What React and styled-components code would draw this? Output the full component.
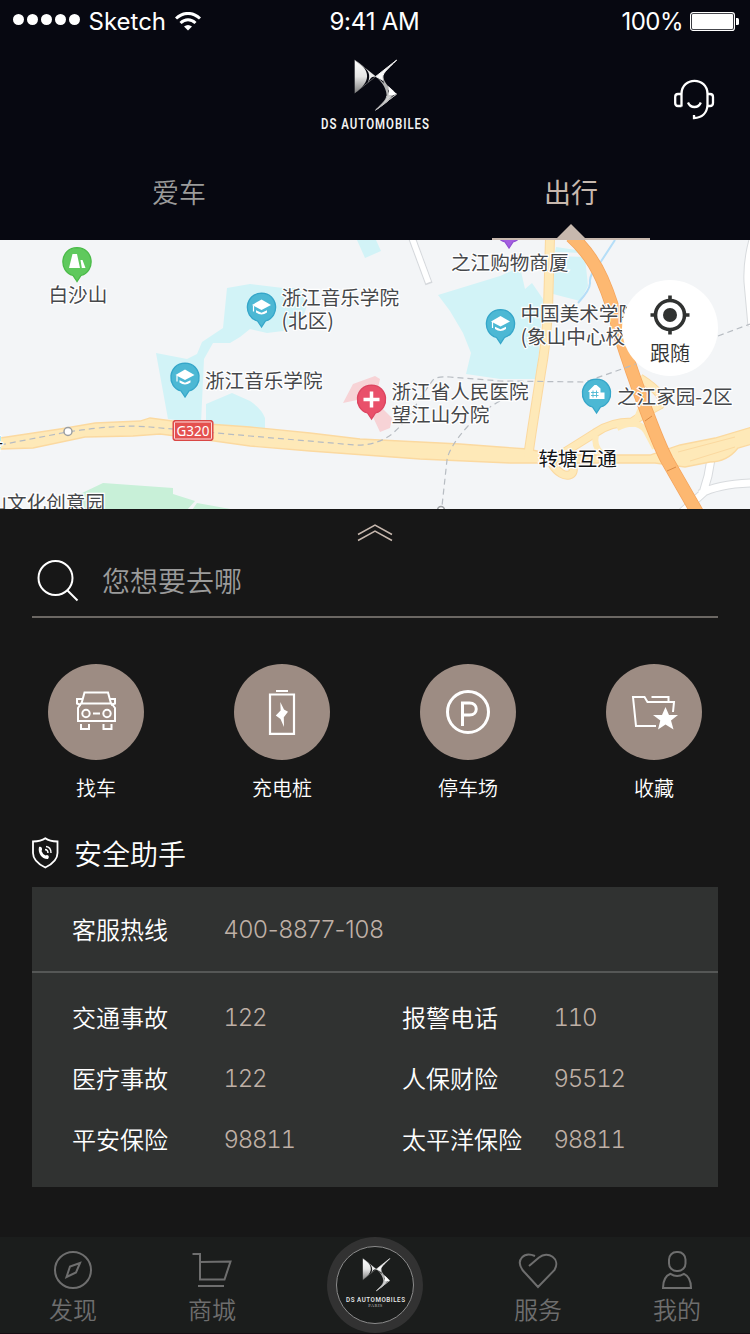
import React from 'react';
import styled, { createGlobalStyle } from 'styled-components';

const cjk = '"Noto Sans CJK SC", sans-serif';
const latin = 'Inter, "Noto Sans CJK SC", sans-serif';

const GlobalStyle = createGlobalStyle`
  * { box-sizing: border-box; }
  body { margin: 0; background: #171717; font-family: ${cjk}; }
  svg { display: block; }
`;

const Screen = styled.div`
  width: 750px;
  height: 1334px;
  display: flex;
  flex-direction: column;
  overflow: hidden;
  background: #171717;
`;

/* ---------- header ---------- */
const Header = styled.header`
  height: 240px;
  display: flex;
  flex-direction: column;
  background: #070811;
`;
const StatusBar = styled.div`
  height: 40px;
  display: grid;
  grid-template-columns: 1fr auto 1fr;
  align-items: center;
  padding: 3px 11px 0 13px;
  color: #fff;
  font: 400 24px/36px ${latin};
`;
const StatusGroup = styled.div`
  display: flex;
  align-items: center;
  justify-content: ${(p) => (p.$end ? 'flex-end' : 'flex-start')};
  gap: ${(p) => (p.$end ? 7 : 8.5)}px;
`;
const StatusText = styled.span`
  letter-spacing: ${(p) => p.$track || 0}px;
  margin-left: ${(p) => p.$shift || 0}px;
`;
const Dots = styled.div`
  display: flex;
  gap: 3px;
  margin-top: -4px;
`;
const Dot = styled.i`
  width: 11px;
  height: 11px;
  border-radius: 50%;
  background: #fff;
`;
const BrandRow = styled.div`
  height: 104px;
  display: grid;
  grid-template-columns: 1fr 180px 1fr;
  align-items: start;
`;
const SupportButton = styled.div`
  justify-self: end;
  padding: 38px 35px 0 0;
`;
const Tabs = styled.nav`
  height: 96px;
  display: flex;
  justify-content: space-between;
  padding: 0 100px;
`;
const Tab = styled.div`
  width: 158px;
  display: flex;
  flex-direction: column;
  align-items: center;
  justify-content: space-between;
  padding-top: 28px;
  font-size: 27px;
  line-height: 40px;
  font-weight: ${(p) => (p.$active ? 400 : 350)};
  color: ${(p) => (p.$active ? '#c7b8ae' : '#9b9b9b')};
`;
const TabMarker = styled.div`
  width: 100%;
  border-bottom: 2px solid #c7b8ae;
  display: flex;
  justify-content: center;
  &::before {
    content: '';
    border: 14px solid transparent;
    border-top-width: 0;
    border-bottom-color: #c7b8ae;
  }
`;

/* ---------- map ---------- */
const MapArea = styled.section`
  position: relative;
  height: 269px;
  flex: none;
  overflow: hidden;
  background: #f3f5f7;
`;
const MapLabel = styled.div`
  position: absolute;
  left: ${(p) => p.$x}px;
  top: ${(p) => p.$y - 253}px;
  font-size: 19.6px;
  line-height: 23px;
  white-space: pre;
  font-weight: 400;
  color: ${(p) => (p.$strong ? '#121315' : '#46484b')};
  -webkit-text-stroke: 2.4px #fff;
  paint-order: stroke fill;
`;
const FollowButton = styled.div`
  position: absolute;
  right: 32px;
  top: 40px;
  width: 96px;
  height: 96px;
  border-radius: 50%;
  background: #fff;
  display: flex;
  flex-direction: column;
  align-items: center;
  padding-top: 15px;
  gap: 3px;
  color: #303231;
  font-size: 20px;
  font-weight: 350;
  line-height: 30px;
`;

/* ---------- panel ---------- */
const Panel = styled.main`
  height: 728px;
  flex: none;
  display: flex;
  flex-direction: column;
  padding: 14px 32px 0;
`;
const Handle = styled.div`
  display: flex;
  justify-content: center;
`;
const SearchBar = styled.div`
  height: 76px;
  display: flex;
  align-items: center;
  gap: 22px;
  padding: 2px 0 0 4px;
  border-bottom: 2px solid #6b6763;
  color: #9b9b9b;
  font-size: 28px;
  font-weight: 350;
  line-height: 40px;
`;
const Shortcuts = styled.div`
  display: flex;
  justify-content: space-between;
  padding: 46px 16px 0;
`;
const Shortcut = styled.div`
  width: 96px;
  display: flex;
  flex-direction: column;
  align-items: center;
  gap: 13px;
  color: #fff;
  font-size: 20px;
  font-weight: 350;
  line-height: 30px;
`;
const ShortcutDisc = styled.div`
  width: 96px;
  height: 96px;
  border-radius: 50%;
  background: #9d8c83;
  display: grid;
  place-items: center;
`;
const SectionTitle = styled.h2`
  margin: 29px 0 13px;
  height: 42px;
  display: flex;
  align-items: center;
  gap: 15px;
  color: #fff;
  font-size: 28px;
  font-weight: 350;
  line-height: 42px;
`;
const Card = styled.section`
  background: #303231;
  height: 300px;
`;
const CardRows = styled.div`
  display: grid;
  grid-template-columns: 152px 178px 152px 1fr;
  grid-auto-rows: 61px;
  align-items: center;
  padding: ${(p) => (p.$top ? '12px 0 11px 40px' : '14px 0 0 40px')};
  border-bottom: ${(p) => (p.$top ? '2px solid #555756' : 'none')};
`;
const RowLabel = styled.span`
  color: #fff;
  font-size: 24px;
  font-weight: 350;
  line-height: 36px;
  padding-bottom: 2px;
`;
const RowValue = styled.span`
  color: #bfb0a6;
  font: 300 24px/36px ${latin};
  font-variant-numeric: ${(p) => (p.$wide ? 'normal' : 'tabular-nums')};
  letter-spacing: ${(p) => (p.$wide ? -0.15 : -1.3)}px;
  margin-left: -0.5px;
  white-space: nowrap;
`;

/* ---------- bottom navigation ---------- */
const BottomNav = styled.nav`
  height: 97px;
  flex: none;
  display: flex;
  justify-content: space-between;
  padding: 0 24px;
  background: #1b1d1c;
  border-bottom: 1px solid #150d12;
`;
const NavPair = styled.div`
  display: flex;
  gap: 41px;
`;
const NavItem = styled.div`
  width: 98px;
  display: flex;
  flex-direction: column;
  align-items: center;
  padding-top: 13px;
  color: #6e6e6e;
  font-size: 24px;
  font-weight: 350;
  line-height: 38px;
`;
const NavHome = styled.div`
  width: 96px;
  height: 96px;
  border-radius: 50%;
  background: #323232;
  display: grid;
  place-items: center;
`;

/* ---------- drawings ---------- */
const Emblem = ({ id }) => (
  <>
    <defs>
      <linearGradient id={id} x1="0" y1="0" x2="0" y2="1">
        <stop offset="0" stopColor="#fff" />
        <stop offset=".5" stopColor="#e6e6e6" />
        <stop offset="1" stopColor="#808080" />
      </linearGradient>
    </defs>
    <path d="M0 0C16.500 10 16.500 22 0 33Z" fill={`url(#${id})`} />
    <path d="M0 0L21 16.500L0 33" fill="none" stroke="#8a8a8a" strokeWidth=".6" />
    <path d="M6 4.500L21 16.500L17.500 17C15.500 18 15 20 13 23C16.500 15 14 10 6 4.500Z" fill="#eee" />
    <path d="M42 0L21 16.500L28.500 20.500C26 13.500 33 9.500 42 0Z" fill="#fafafa" stroke="#eee" strokeWidth="1" />
    <path d="M22 17.500C26 20 34 26 35 37L32 38.500C32.500 29 28 23 22 17.500ZM28.500 16C29 22 33 26 39 31L36 32C30.500 28 27.500 22 28.500 16Z" fill="#b2b2b2" />
    <path d="M33.500 26L42 34L33 37.500C34.500 34 34.500 30 33.500 26Z" fill="#fff" />
    <path d="M42 34L21 50C28 43 31.500 40 32 36L37 35.500C35 40 32 42.500 21 50Z" fill="#cfcfcf" stroke="#bdbdbd" strokeWidth=".9" />
  </>
);

const BrandLogo = () => (
  <svg width="180" height="104" viewBox="285 40 180 104">
    <g transform="translate(354.700 60)"><Emblem id="brand" /></g>
    <text x="321" y="129" textLength="109" lengthAdjust="spacingAndGlyphs" fill="#f2f2f2" fontFamily="Roboto" fontWeight="600" fontSize="15" letterSpacing="1.300">DS AUTOMOBILES</text>
  </svg>
);

const Wifi = () => (
  <svg width="26" height="20" viewBox="0 1 26 20" fill="none" stroke="#fff" strokeWidth="3">
    <path d="M1 7.500C8 .7 18 .7 25 7.500" />
    <path d="M5.500 12C10 7.800 16 7.800 20.500 12" />
    <path d="M13 19.500L9 15.600C11.500 13.600 14.500 13.600 17 15.600Z" fill="#fff" stroke="none" />
  </svg>
);

const Battery = () => (
  <svg width="49" height="20" viewBox="0 0 49 20">
    <rect x=".6" y=".6" width="43.800" height="17.800" rx="2.500" fill="none" stroke="#fff" strokeWidth="1.200" />
    <rect x="2" y="2" width="41" height="15" rx="1" fill="#fff" />
    <path d="M46 6h1.500q1.500 0 1.500 1.500v4q0 1.500-1.500 1.500H46Z" fill="#fff" />
  </svg>
);

const Headset = () => (
  <svg width="42" height="42" viewBox="673 78 42 42" fill="none" stroke="#fff" strokeWidth="2.300">
    <path d="M681.500 106.500V94C681.500 76.500 707.500 76.500 707.500 94V105C707 113 702 117.800 694 118V115" />
    <path d="M681.500 94H678Q675.200 94 675.200 97V103Q675.200 106 678 106H681.500M707.500 94H710Q713 94 713 97V103Q713 106 710 106H707.500" />
    <path d="M688 102.500C690.500 108.500 698.500 108.500 700.800 102.500" />
  </svg>
);

const pinGlyphs = {
  tree: <path d="M-8 6L-4.500-8H0L3 6ZM3.500-2H5.500L8.500 6H4.800Z" fill="#fff" />,
  cap: (
    <>
      <path d="M0-8L9.500-2.500L0 2.500L-9.500-2.500Z" fill="#fff" />
      <path d="M-5.500 2.800L0 5.200L5.500 2.800V5Q0 9-5.500 5Z" fill="#fff" />
      <path d="M-8-2V4" stroke="#fff" strokeWidth="1.200" />
    </>
  ),
  cross: <path d="M0-8V8M-8 0H8" stroke="#fff" strokeWidth="3.500" />,
  home: (
    <>
      <path d="M-8.500-2L-2-8.500H0L4-5V-1H8V5.500H-7V-1.500Z" fill="#fff" />
      <path d="M-3.500-3V4M0-3V4M-5.500-1H2M-5.500 2H2" stroke="#4cb8d4" strokeWidth=".9" />
    </>
  ),
};

const Pin = ({ x, y, fill, edge, glyph }) => (
  <g transform={`translate(${x} ${y})`}>
    <path d="M0 19.500L-4 13.500C-19 9-17-14 0-14.300C17-14 19 9 4 13.500Z" fill={fill} stroke={edge} strokeWidth="1.300" />
    {pinGlyphs[glyph]}
  </g>
);

const MapDrawing = () => (
  <svg width="750" height="269" viewBox="0 240 750 269" fill="none">
    <g fill="#d2f3f7">
      <path d="M156 353L187 359L197 354L202 342L223 328L227 288L250 284L283 288L300 288L307 306L300 325L283 331L267 333L250 329L240 337L230 343L213 343L204 359L201 423L168 419Z" />
      <path d="M206 404L232 393L250 401Q262 409 265 418V430L206 425Z" />
      <path d="M357 240L365 258L381 251L376 240Z" />
      <path d="M438 295L500 276L520 267L525 289L532 283L543 299L537 379H500L466 374L471 353L463 333L450 311Z" />
      <path d="M555 256L585 257L588 286L580 301L553 294ZM556 247L583 251V253L555 252Z" />
    </g>
    <path d="M80 494L103 483L173 488V494L195 501L187 510H85ZM197 503L236 510H192Z" fill="#c8f0d8" />
    <path d="M343 403L353 384L375 376L380 379L378 388L383 409L392 418L390 428L380 432L373 417L357 400Z" fill="#f7d3d6" />
    <path d="M615 240L600 263Q589 275 590 282T578 303" stroke="#b5def8" strokeWidth="2" />

    <path d="M412 238L429 284" stroke="#d5d8dc" strokeWidth="7.500" />
    <path d="M412 238L428.500 282.500" stroke="#fff" strokeWidth="5.500" />
    <path d="M753 240Q747 262 748 282L752 326M710 440L711 459L708 476L703 493L680 514M700 494Q718 484 752 483" stroke="#d8dbde" strokeWidth="9" />
    <path d="M753 240Q747 262 748 282L752 326M710 440L711 459L708 476L703 493L680 514M700 494Q718 484 752 483" stroke="#fff" strokeWidth="7" />

    <g stroke="#fbd9a0">
      <path d="M550 238L548 310Q546 345 541 372L532 430L528 457" strokeWidth="10" />
      <path d="M560 455L595 433Q610 422 632 422Q650 410 660 405Q668 396 640 378M552 464C564 483 579 474 571 465L569 462" strokeWidth="9" />
      <path d="M0 438L60 429L95 423L140 421L150 418L180 422L250 427L310 433L360 439L460 444L500 447L528 449L555 455H650L680 445L715 438L752 427V444L738 448Q727 462 710 462L685 467L655 463H550L510 463L420 459L310 451L250 446L200 439L160 434L133 436L85 437L33 448L0 449Z" fill="#fee9b8" strokeWidth="1.300" />
      <path d="M550 238L548 310Q546 345 541 372L532 430L528 457" stroke="#fee9b8" strokeWidth="8" />
      <path d="M552 464C564 483 579 474 571 465L569 462M560 455L595 433Q610 422 632 422Q650 410 660 405Q668 396 640 378" stroke="#fee9b8" strokeWidth="7" />
      <path d="M596 435Q593 446 602 454M617 428Q637 418 646 431L655 448M635 423L645 398" stroke="#fee9b8" strokeWidth="6" />
      <path d="M678 452L735 437M690 461L735 447" strokeWidth="1" />
    </g>
    <path d="M571 236Q591 254 602 279Q613 304 619 332Q632 373 646 410T667 460L698 514" stroke="#f5a55d" strokeWidth="13.500" />
    <path d="M571 236Q591 254 602 279Q613 304 619 332Q632 373 646 410T667 460L698 514" stroke="#fdb871" strokeWidth="12" />
    <path d="M667 471L676 467M645 421L652 416" stroke="#db8b45" strokeWidth="1" />

    <g stroke="#b7bcc2" strokeWidth="1.200" strokeDasharray="6 4">
      <path d="M0 445L67 432Q120 424 150 427L250 436L355 445Q376 446 392 434Q410 418 418 401L433 380Q437 376 450 377L500 381L585 382L636 364M718 336L750 324" />
      <path d="M500 401Q480 412 468 426Q449 447 447 460L442 506" />
    </g>
    <circle cx="68" cy="431.500" r="4" fill="#fff" stroke="#9b9ea1" strokeWidth="1.500" />
    <circle cx="441" cy="510" r="3.500" fill="#fff" stroke="#9b9ea1" strokeWidth="1.500" />
    <rect x="173" y="420.500" width="40" height="20" rx="2" fill="#e4504e" stroke="#d94745" />
    <rect x="174.500" y="422" width="37" height="17" rx="1" stroke="#fbdcdc" strokeWidth="1" />
    <text x="193" y="435.600" textAnchor="middle" fill="#fff" fontFamily="Noto Sans" fontSize="13.500">G320</text>

    <Pin x={77} y={262} fill="#5fc95d" edge="#4abb48" glyph="tree" />
    <Pin x={185} y={377.500} fill="#4cb8d4" edge="#35a6c9" glyph="cap" />
    <Pin x={261.500} y={307.500} fill="#4cb8d4" edge="#35a6c9" glyph="cap" />
    <Pin x={500.500} y={324} fill="#4cb8d4" edge="#35a6c9" glyph="cap" />
    <Pin x={596.500} y={393.500} fill="#4cb8d4" edge="#35a6c9" glyph="home" />
    <Pin x={371.500} y={399.500} fill="#e9506a" edge="#dc4560" glyph="cross" />
    <Pin x={509} y={228.500} fill="#a45fe0" edge="#9150d2" />
  </svg>
);

const labels = [
  { x: 48.5, y: 295, text: '白沙山' },
  { x: 281.5, y: 298, text: '浙江音乐学院\n(北区)' },
  { x: 205, y: 381, text: '浙江音乐学院' },
  { x: 391.5, y: 392, text: '浙江省人民医院\n望江山分院' },
  { x: 451, y: 262.5, text: '之江购物商厦' },
  { x: 520.5, y: 314, text: '中国美术学院\n(象山中心校区)' },
  { x: 617, y: 397, text: '之江家园-2区' },
  { x: 538.5, y: 458.5, text: '转塘互通', strong: true },
  { x: -12.5, y: 502.5, text: '山文化创意园' },
  { x: -16, y: 445, text: '号', strong: true },
];

const Locate = () => (
  <svg width="40" height="40" viewBox="-20 -20 40 40" fill="none" stroke="#303231" strokeWidth="3.600">
    <circle r="14.500" />
    <circle r="7" fill="#303231" stroke="none" />
    <path d="M0-19.500V-13M0 13V19.500M-19.500 0H-13M13 0H19.500" />
  </svg>
);

const Chevrons = () => (
  <svg width="36" height="19" viewBox="357 523 36 19" fill="none" stroke="#c7b8ae" strokeWidth="1.500">
    <path d="M358 534.500L375 525L392 534.500M358 540.500L375 531L392 540.500" />
  </svg>
);

const Magnifier = () => (
  <svg width="44" height="44" viewBox="36 558 44 44" fill="none" stroke="#fff" strokeWidth="2">
    <circle cx="55.500" cy="578" r="17" />
    <path d="M67 590L77.500 600.500" />
  </svg>
);

const CarIcon = () => (
  <svg width="48" height="48" viewBox="72 688 48 48" fill="none" stroke="#fff" strokeWidth="2">
    <path d="M81.500 703.500L84.500 692.500H108L111 703.500M81 703.500H111.500L115 708V721H78V708Z" />
    <path d="M82 699H77V703.500L81 705M110 699H115V703.500L111 705M81 724V729H89V724M103.500 724V729H111.500V724M93 713.500H100" />
    <circle cx="86" cy="713.500" r="3.700" />
    <circle cx="107" cy="713.500" r="3.700" />
  </svg>
);
const ChargeIcon = () => (
  <svg width="48" height="48" viewBox="258 688 48 48" fill="none" stroke="#fff" strokeWidth="2.200">
    <path d="M270 694.500H294V733.800H270ZM276 691H288" />
    <path d="M280.300 702L284 709.500L288 711.800L283.800 717.300L284 727L280.500 719L275.800 715.500L280.600 710.500Z" fill="#fff" stroke="none" />
  </svg>
);
const ParkingIcon = () => (
  <svg width="48" height="48" viewBox="444 688 48 48" fill="none" stroke="#fff" strokeWidth="3">
    <circle cx="468" cy="712" r="20.500" />
    <path d="M462.500 726V703H469.500C478.500 703 478.500 715 469.500 715H462.500" />
  </svg>
);
const FavouriteIcon = () => (
  <svg width="48" height="48" viewBox="630 688 48 48" fill="none" stroke="#fff" strokeWidth="2">
    <path d="M656 726H636L633 697H644.500L647.500 702H674L673 712M651.500 697H668.500V702" />
    <path d="M665.500 707L669 715H678L671 720.500L673.500 729.500L665.500 724.500L658 729.500L660.300 720.500L653 715H662Z" fill="#fff" stroke="none" />
  </svg>
);
const ShieldPhone = () => (
  <svg width="27" height="32" viewBox="0 0 27 32" fill="none" stroke="#fff" strokeWidth="1.800">
    <path d="M13.300 1.300C10 3.800 6 4.500 1 4.500V16C1 23 6 27 13.300 30.500C20.500 27 25.500 23 25.500 16V4.500C20.500 4.500 16.500 3.800 13.300 1.300Z" />
    <path d="M7 10C9 9 10.500 11 10 13L9.500 14Q10.500 17 13.500 18.500L15 18C17 18.500 17.500 20 16 22C10 22.500 5.500 16 7 10Z" fill="#fff" stroke="none" />
    <path d="M13 12.500Q16 12.700 16 16M14 9.500Q19 10 19 16" strokeWidth="1.400" />
  </svg>
);

const CompassIcon = () => (
  <svg width="42" height="40" viewBox="52 1250 42 40" fill="none" stroke="#6e6e6e" strokeWidth="2">
    <circle cx="73" cy="1270" r="18" />
    <path d="M80 1263L76 1272.500L66.500 1277L70 1266.500Z" />
  </svg>
);
const CartIcon = () => (
  <svg width="42" height="40" viewBox="191 1250 42 40" fill="none" stroke="#6e6e6e" strokeWidth="2">
    <path d="M192.500 1254H200V1279.500H224.500L230.500 1261.500L200 1262M198 1286H224" />
  </svg>
);
const HeartIcon = () => (
  <svg width="42" height="40" viewBox="517 1250 42 40" fill="none" stroke="#6e6e6e" strokeWidth="2">
    <path d="M529 1266L539 1257.500C548 1250 561 1259 554.500 1270L538 1287L522.500 1270C515.500 1260 524 1251 535 1256" />
  </svg>
);
const PersonIcon = () => (
  <svg width="42" height="40" viewBox="656 1250 42 40" fill="none" stroke="#6e6e6e" strokeWidth="2">
    <rect x="669" y="1252" width="16.500" height="19" rx="7.500" />
    <path d="M670.500 1273.800Q677 1278 684 1273.800C689 1276 691 1280 691 1288H663C663 1280 665 1276 670.500 1273.800Z" />
  </svg>
);
const HomeLogo = () => (
  <svg width="80" height="80" viewBox="335 1245 80 80">
    <circle cx="375" cy="1285" r="38.500" fill="#1b1d1c" stroke="#8b8b8b" strokeWidth="1" />
    <g transform="translate(362.800 1258.500) scale(.645)"><Emblem id="home" /></g>
    <text x="346" y="1301.500" textLength="59.500" lengthAdjust="spacingAndGlyphs" fill="#eee" fontFamily="Roboto" fontWeight="500" fontSize="8" letterSpacing=".7">DS AUTOMOBILES</text>
    <text x="375.500" y="1307.200" textAnchor="middle" fill="#bbb" fontFamily="Liberation Serif" fontSize="4.600" letterSpacing=".4">PARIS</text>
  </svg>
);

const shortcuts = [
  ['找车', CarIcon],
  ['充电桩', ChargeIcon],
  ['停车场', ParkingIcon],
  ['收藏', FavouriteIcon],
];
const contacts = [
  ['交通事故', '122'],
  ['报警电话', '110'],
  ['医疗事故', '122'],
  ['人保财险', '95512'],
  ['平安保险', '98811'],
  ['太平洋保险', '98811'],
];

export default function App() {
  return (
    <Screen>
      <GlobalStyle />
      <Header>
        <StatusBar>
          <StatusGroup>
            <Dots>{[0, 1, 2, 3, 4].map((n) => <Dot key={n} />)}</Dots>
            <StatusText>Sketch</StatusText>
            <Wifi />
          </StatusGroup>
          <StatusText $track={-0.2} $shift={-3}>9:41 AM</StatusText>
          <StatusGroup $end>
            <StatusText $track={-0.5}>100%</StatusText>
            <Battery />
          </StatusGroup>
        </StatusBar>
        <BrandRow>
          <span />
          <BrandLogo />
          <SupportButton><Headset /></SupportButton>
        </BrandRow>
        <Tabs>
          <Tab>爱车</Tab>
          <Tab $active>出行<TabMarker /></Tab>
        </Tabs>
      </Header>

      <MapArea>
        <MapDrawing />
        {labels.map((l) => (
          <MapLabel key={l.x} $x={l.x} $y={l.y} $strong={l.strong}>{l.text}</MapLabel>
        ))}
        <FollowButton><Locate />跟随</FollowButton>
      </MapArea>

      <Panel>
        <Handle><Chevrons /></Handle>
        <SearchBar><Magnifier />您想要去哪</SearchBar>
        <Shortcuts>
          {shortcuts.map(([name, Icon]) => (
            <Shortcut key={name}>
              <ShortcutDisc><Icon /></ShortcutDisc>
              {name}
            </Shortcut>
          ))}
        </Shortcuts>
        <SectionTitle><ShieldPhone />安全助手</SectionTitle>
        <Card>
          <CardRows $top>
            <RowLabel>客服热线</RowLabel>
            <RowValue $wide>400-8877-108</RowValue>
          </CardRows>
          <CardRows>
            {contacts.map(([name, number]) => (
              <React.Fragment key={name}>
                <RowLabel>{name}</RowLabel>
                <RowValue>{number}</RowValue>
              </React.Fragment>
            ))}
          </CardRows>
        </Card>
      </Panel>

      <BottomNav>
        <NavPair>
          <NavItem><CompassIcon />发现</NavItem>
          <NavItem><CartIcon />商城</NavItem>
        </NavPair>
        <NavHome><HomeLogo /></NavHome>
        <NavPair>
          <NavItem><HeartIcon />服务</NavItem>
          <NavItem><PersonIcon />我的</NavItem>
        </NavPair>
      </BottomNav>
    </Screen>
  );
}
